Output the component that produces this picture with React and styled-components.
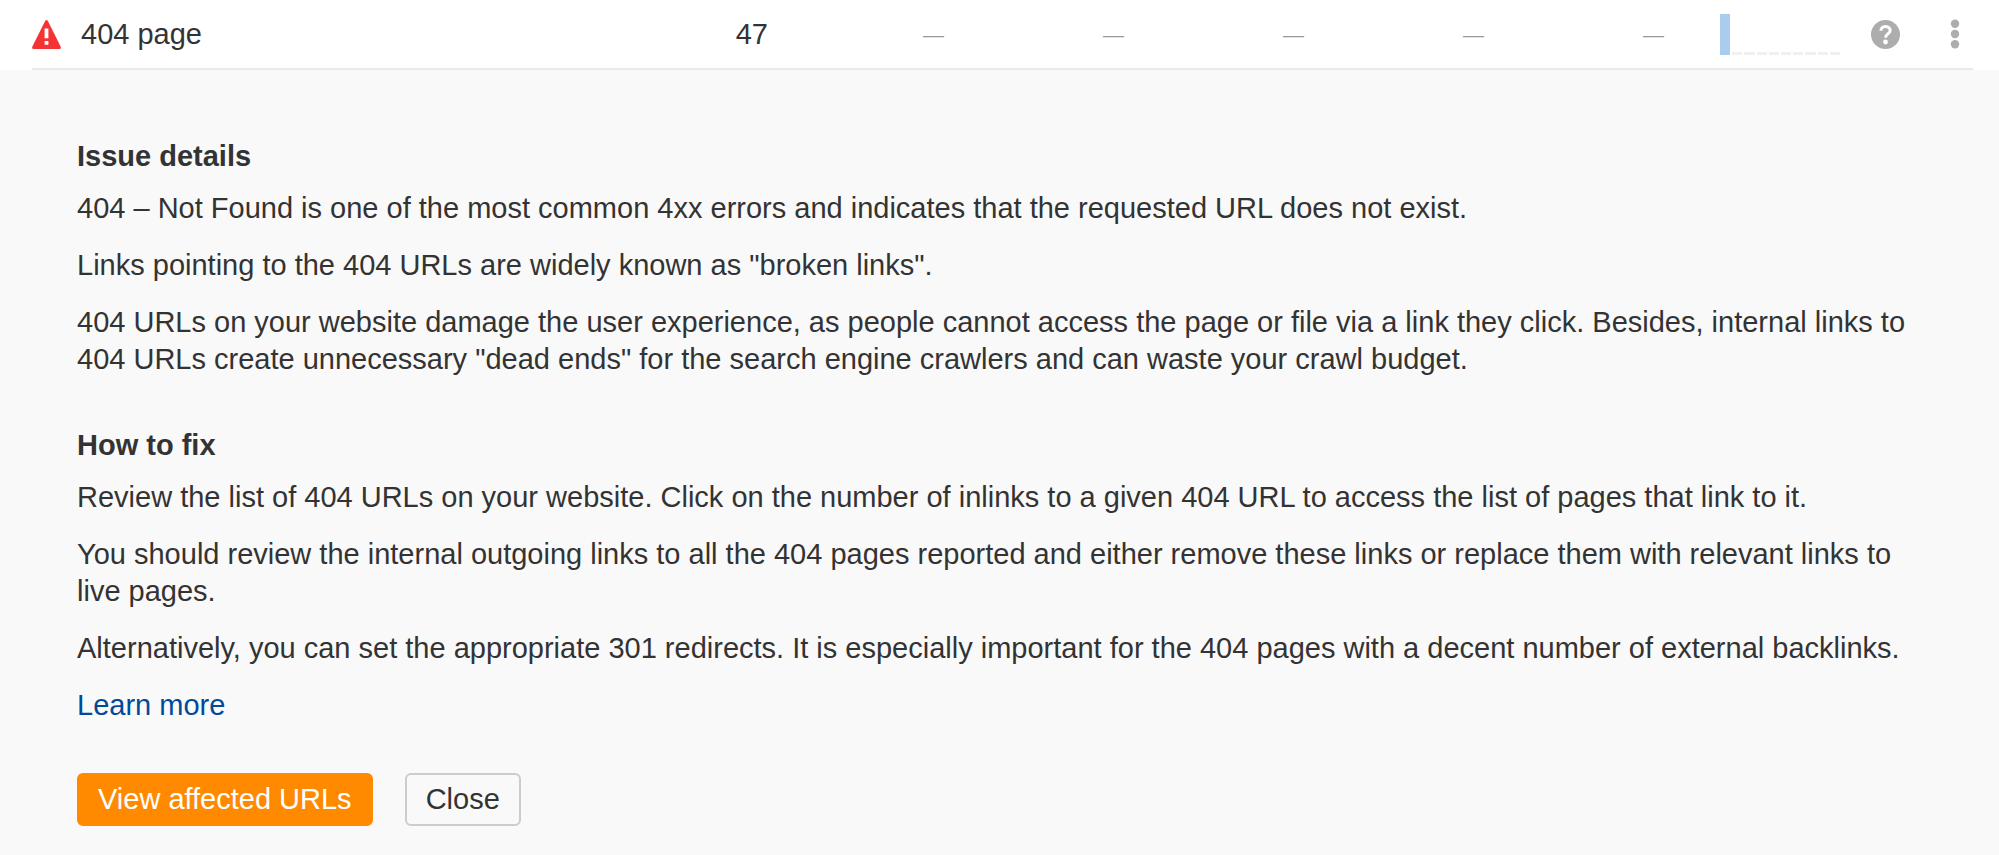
import React, { useState } from 'react';
import styled, { createGlobalStyle } from 'styled-components';

const GlobalStyle = createGlobalStyle`
  * {
    box-sizing: border-box;
  }
  body {
    margin: 0;
    background: #ffffff;
    color: #333333;
    font-family: "Liberation Sans", Arial, sans-serif;
    font-size: 29px;
    line-height: 37px;
  }
`;

const RowWrapper = styled.div`
  padding: 0 26px 0 32px;
  background: #ffffff;
`;

const IssueTable = styled.table`
  width: 100%;
  table-layout: fixed;
  border-collapse: separate;
  border-spacing: 0;
`;

const Cell = styled.td`
  width: ${({ $width }) => ($width ? `${$width}px` : 'auto')};
  height: 70px;
  padding: 0;
  border-bottom: 2px solid #e9e9e9;
  text-align: ${({ $align }) => $align || 'left'};
  vertical-align: middle;
`;

const EmptyCell = styled(Cell)`
  padding-right: 4px;
  color: #999999;
  font-size: 21px;
`;

const IssueName = styled.div`
  display: flex;
  align-items: center;
  gap: 20px;
`;

const Trend = styled.div`
  display: flex;
  align-items: flex-end;
  gap: 2px;
  height: 41px;
  padding-left: 52px;
`;

const Bar = styled.span`
  flex: 1;
  height: ${({ $filled }) => ($filled ? '41px' : '3px')};
  background: ${({ $filled }) => ($filled ? '#a8cdef' : '#f0f0f0')};
`;

const IconButton = styled.button`
  display: flex;
  padding: 0;
  margin: 0 ${({ $gap }) => $gap || 0}px 0 auto;
  border: 0;
  background: none;
  color: #adadad;
  cursor: pointer;
`;

const Panel = styled.main`
  padding: 68px 80px 29px 77px;
  background: #f9f9f9;
`;

const Section = styled.section`
  margin-bottom: 49px;
`;

const Title = styled.h2`
  margin: 0 0 15px;
  font-size: 29px;
  font-weight: bold;
`;

const Text = styled.p`
  margin: 0 0 20px;

  &:last-child {
    margin-bottom: 0;
  }
`;

const LearnMore = styled.a`
  color: #004a9c;
  text-decoration: none;
`;

const Actions = styled.div`
  display: flex;
  gap: 32px;
`;

const Button = styled.button`
  height: 53px;
  padding: 0 19px;
  border: 2px solid ${({ $primary }) => ($primary ? '#ff8a00' : '#cccccc')};
  border-radius: 6px;
  background: ${({ $primary }) => ($primary ? '#ff8a00' : '#f9f9f9')};
  color: ${({ $primary }) => ($primary ? '#ffffff' : '#333333')};
  font-family: inherit;
  font-size: 29px;
  cursor: pointer;
`;

const WarningIcon = () => (
  <svg width="29" height="29" viewBox="0 0 29 29" aria-hidden="true">
    <path
      d="M13.1 1.1Q14.5 -1 15.9 1.1L28.6 26.6Q29.4 29 27.4 29H1.6Q-.4 29 .4 26.6Z"
      fill="#f43434"
    />
    <path d="M12.6 8.5H16.4V18.2H12.6ZM12.6 21H16.4V24.8H12.6Z" fill="#ffffff" />
  </svg>
);

const HelpIcon = () => (
  <svg width="29" height="29" viewBox="0 0 29 29" aria-hidden="true">
    <circle cx="14.5" cy="14.5" r="14.5" fill="currentColor" />
    <path
      d="M9.9 10.8C9.9 8.1 11.8 6.4 14.5 6.4S19.2 8.1 19.2 10.5C19.2 13.7 14.6 13.8 14.6 17.8"
      fill="none"
      stroke="#ffffff"
      strokeWidth="3"
    />
    <circle cx="14.5" cy="22" r="2.4" fill="#ffffff" />
  </svg>
);

const DotsIcon = () => (
  <svg width="10" height="30" viewBox="0 0 10 30" aria-hidden="true">
    <circle cx="5" cy="4.8" r="4.2" fill="currentColor" />
    <circle cx="5" cy="15" r="4.2" fill="currentColor" />
    <circle cx="5" cy="25.2" r="4.2" fill="currentColor" />
  </svg>
);

const emptyColumns = ['added', 'new', 'removed', 'missing', 'change'];
const trend = [47, 0, 0, 0, 0, 0, 0, 0, 0, 0];

const IssueRow = ({ onToggle }) => (
  <RowWrapper>
    <IssueTable>
      <tbody>
        <tr>
          <Cell>
            <IssueName>
              <WarningIcon />
              <span>404 page</span>
            </IssueName>
          </Cell>
          <Cell $width={180} $align="right">47</Cell>
          {emptyColumns.map((name) => (
            <EmptyCell key={name} $width={180} $align="right">—</EmptyCell>
          ))}
          <Cell $width={172}>
            <Trend>
              {trend.map((value, i) => (
                <Bar key={i} $filled={value > 0} />
              ))}
            </Trend>
          </Cell>
          <Cell $width={60}>
            <IconButton type="button" aria-label="Issue help" onClick={onToggle}>
              <HelpIcon />
            </IconButton>
          </Cell>
          <Cell $width={73}>
            <IconButton type="button" aria-label="More actions" $gap={13}>
              <DotsIcon />
            </IconButton>
          </Cell>
        </tr>
      </tbody>
    </IssueTable>
  </RowWrapper>
);

const IssueDetails = ({ onClose }) => (
  <Panel>
    <Section>
      <Title>Issue details</Title>
      <Text>
        404 – Not Found is one of the most common 4xx errors and indicates that the requested URL
        does not exist.
      </Text>
      <Text>Links pointing to the 404 URLs are widely known as "broken links".</Text>
      <Text>
        404 URLs on your website damage the user experience, as people cannot access the page or
        file via a link they click. Besides, internal links to 404 URLs create unnecessary "dead
        ends" for the search engine crawlers and can waste your crawl budget.
      </Text>
    </Section>
    <Section>
      <Title>How to fix</Title>
      <Text>
        Review the list of 404 URLs on your website. Click on the number of inlinks to a given 404
        URL to access the list of pages that link to it.
      </Text>
      <Text>
        You should review the internal outgoing links to all the 404 pages reported and either
        remove these links or replace them with relevant links to live pages.
      </Text>
      <Text>
        Alternatively, you can set the appropriate 301 redirects. It is especially important for
        the 404 pages with a decent number of external backlinks.
      </Text>
      <Text>
        <LearnMore href="#learn-more">Learn more</LearnMore>
      </Text>
    </Section>
    <Actions>
      <Button type="button" $primary>View affected URLs</Button>
      <Button type="button" onClick={onClose}>Close</Button>
    </Actions>
  </Panel>
);

export default function App() {
  const [isOpen, setIsOpen] = useState(true);

  return (
    <>
      <GlobalStyle />
      <IssueRow onToggle={() => setIsOpen(!isOpen)} />
      {isOpen && <IssueDetails onClose={() => setIsOpen(false)} />}
    </>
  );
}
